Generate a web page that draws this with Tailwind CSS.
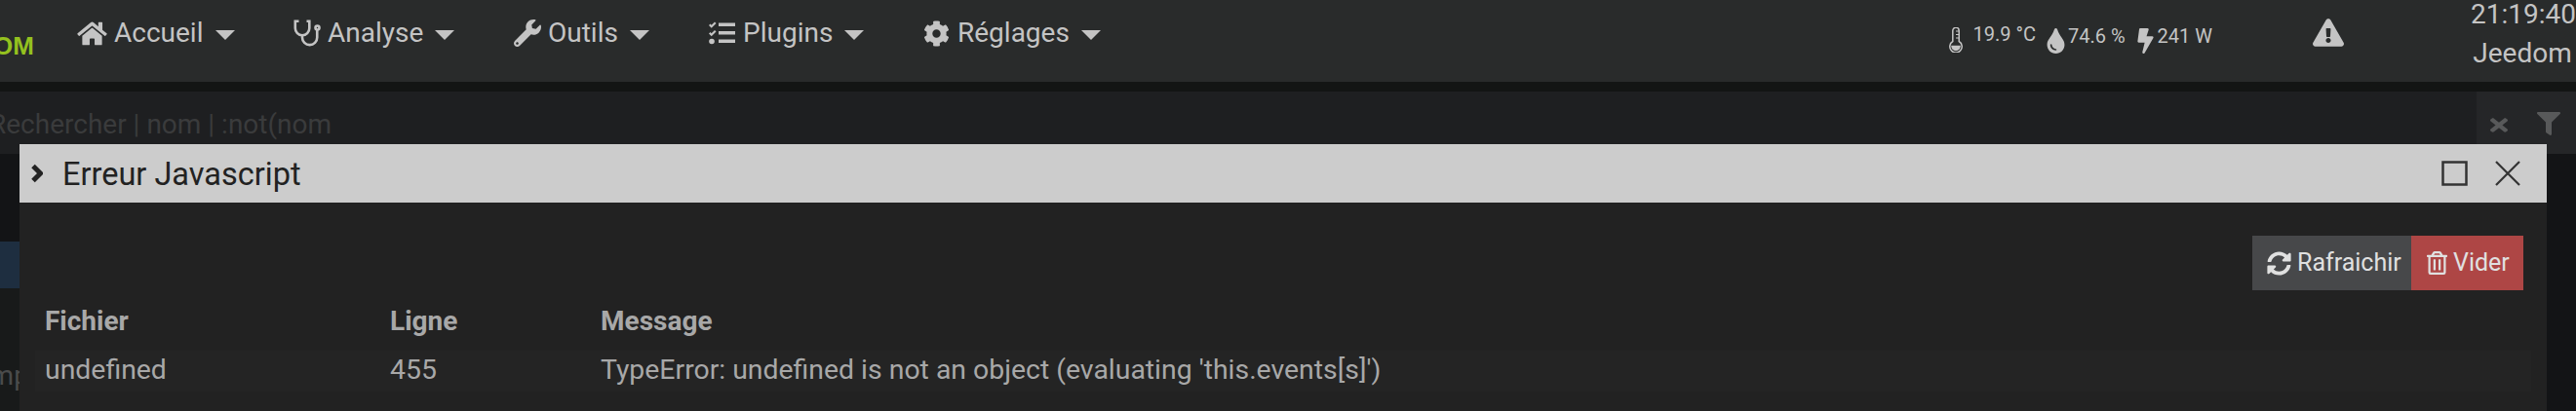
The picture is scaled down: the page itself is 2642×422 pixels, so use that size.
<!DOCTYPE html>
<html lang="fr">
  <head>
    <meta charset="UTF-8" />
    <title>Jeedom</title>
    <script src="https://cdn.jsdelivr.net/npm/@tailwindcss/browser@4"></script>
  </head>
  <body class="relative w-[2642px] h-[422px] overflow-hidden bg-[#131416] font-['Roboto',sans-serif] text-[28px] text-[#c4c4c4]">
    <!-- barre de navigation -->
    <nav class="flex items-start h-[84px] bg-[#292b2b]">
      <div class="w-[79px] h-full overflow-hidden flex justify-end pr-[44px] pt-[31px]">
        <span class="shrink-0 whitespace-nowrap font-['Liberation_Sans',sans-serif] font-bold text-[26px] leading-[32px] text-[#94c11f]">OM</span>
      </div>
      <div class="flex items-center h-[68px] w-[221px]">
        <svg class="w-[31px] h-[27px] fill-current" viewBox="0 0 576 512"><path d="M280.37 148.26L96 300.11V464a16 16 0 0 0 16 16l112.06-.29a16 16 0 0 0 15.92-16V368a16 16 0 0 1 16-16h64a16 16 0 0 1 16 16v95.64a16 16 0 0 0 16 16.05L464 480a16 16 0 0 0 16-16V300L295.67 148.26a12.19 12.19 0 0 0-15.3 0zM571.6 251.47L488 182.56V44.05a12 12 0 0 0-12-12h-56a12 12 0 0 0-12 12v72.61L318.47 43a48 48 0 0 0-61 0L4.34 251.47a12 12 0 0 0-1.6 16.9l25.5 31A12 12 0 0 0 45.15 301l235.22-193.74a12.19 12.19 0 0 1 15.3 0L530.9 301a12 12 0 0 0 16.9-1.6l25.5-31a12 12 0 0 0-1.7-16.93z"/></svg>
        <span class="ml-[7px]">Accueil</span>
        <span class="ml-[13px] mt-[3px] border-x-[10px] border-x-transparent border-t-[10px] border-t-current"></span>
      </div>
      <div class="flex items-center h-[68px] w-[227px]">
        <svg class="ml-[1px] w-[28px] h-[28px] fill-none stroke-current" viewBox="0 0 28 28" stroke-width="2.600"><path d="M5.500 1.800H1.800V9a7.250 7.250 0 0 0 14.500 0V1.800h-2.800"/><path d="M9 16.500v2a7.600 7.600 0 0 0 15.250 0V11"/><circle cx="24.500" cy="8.500" r="2"/></svg>
        <span class="ml-[7px]">Analyse</span>
        <span class="ml-[12px] mt-[3px] border-x-[10px] border-x-transparent border-t-[10px] border-t-current"></span>
      </div>
      <div class="flex items-center h-[68px] w-[199px]">
        <svg class="w-[28px] h-[28px] fill-current" viewBox="0 0 512 512"><path d="M507.73 109.1c-2.24-9.03-13.54-12.09-20.12-5.51l-74.36 74.36-67.88-11.31-11.31-67.88 74.36-74.36c6.62-6.62 3.43-17.9-5.66-20.16-47.38-11.74-99.55.91-136.58 37.93-39.64 39.64-50.55 97.1-34.05 147.2L18.74 402.76c-24.99 24.99-24.99 65.51 0 90.5 24.99 24.99 65.51 24.99 90.5 0l213.21-213.21c50.12 16.71 107.47 5.68 147.37-34.22 37.07-37.07 49.7-89.32 37.91-136.73zM64 472c-13.25 0-24-10.75-24-24 0-13.26 10.75-24 24-24s24 10.74 24 24c0 13.25-10.75 24-24 24z"/></svg>
        <span class="ml-[7px]">Outils</span>
        <span class="ml-[12px] mt-[3px] border-x-[10px] border-x-transparent border-t-[10px] border-t-current"></span>
      </div>
      <div class="flex items-center h-[68px] w-[221px]">
        <svg class="w-[28px] h-[24px] fill-current" viewBox="0 0 28 24"><path d="M1 4l1.500-1.500 1.200 1.200L7 .5 8.500 2 3.700 6.800zM1 12.500L2.500 11l1.200 1.200L7 9l1.500 1.500-4.800 4.800z"/><circle cx="4" cy="20.500" r="2.800"/><rect x="11" y="1.500" width="17" height="3.500"/><rect x="11" y="10" width="17" height="3.500"/><rect x="11" y="18.500" width="17" height="3.500"/></svg>
        <span class="ml-[8px]">Plugins</span>
        <span class="ml-[12px] mt-[3px] border-x-[10px] border-x-transparent border-t-[10px] border-t-current"></span>
      </div>
      <div class="flex items-center h-[68px]">
        <svg class="w-[27px] h-[27px] fill-current" viewBox="0 0 512 512"><path d="M487.4 315.7l-42.6-24.6c4.3-23.2 4.3-47 0-70.2l42.6-24.6c4.9-2.8 7.1-8.6 5.5-14-11.1-35.6-30-67.8-54.7-94.6-3.8-4.1-10-5.1-14.8-2.3L380.8 110c-17.9-15.4-38.5-27.3-60.8-35.1V25.8c0-5.6-3.9-10.5-9.4-11.7-36.7-8.2-74.3-7.8-109.2 0-5.5 1.2-9.4 6.1-9.4 11.7V75c-22.2 7.9-42.8 19.8-60.8 35.1L88.7 85.5c-4.9-2.8-11-1.9-14.8 2.3-24.7 26.7-43.6 58.9-54.7 94.6-1.7 5.4.6 11.2 5.5 14L67.3 221c-4.3 23.2-4.3 47 0 70.2l-42.6 24.6c-4.9 2.8-7.1 8.6-5.5 14 11.1 35.6 30 67.8 54.7 94.6 3.8 4.1 10 5.1 14.8 2.3l42.6-24.6c17.9 15.4 38.5 27.3 60.8 35.1v49.2c0 5.6 3.9 10.5 9.4 11.7 36.7 8.2 74.3 7.8 109.2 0 5.5-1.2 9.4-6.1 9.4-11.7v-49.2c22.2-7.9 42.8-19.8 60.8-35.1l42.6 24.6c4.9 2.8 11 1.9 14.8-2.3 24.7-26.7 43.6-58.9 54.7-94.6 1.5-5.5-.7-11.3-5.6-14.1zM256 336c-44.1 0-80-35.9-80-80s35.9-80 80-80 80 35.9 80 80-35.9 80-80 80z"/></svg>
        <span class="ml-[8px]">Réglages</span>
        <span class="ml-[12px] mt-[3px] border-x-[10px] border-x-transparent border-t-[10px] border-t-current"></span>
      </div>

      <!-- infos de droite -->
      <div class="ml-auto flex items-start text-[20px] leading-[24px]">
        <svg class="mt-[28px] w-[14px] h-[26px] fill-none stroke-current" viewBox="0 0 14 26" stroke-width="1.500"><path d="M3.800 14.500V3.500a3.200 3.200 0 0 1 6.400 0v11a6.200 6.200 0 1 1-6.400 0z"/><path d="M7 4h3M7 7.500h3M7 11h3" stroke-width="1.200"/><path d="M3 19.500h8a4 4 0 0 1-8 0z" class="fill-current"/></svg>
        <span class="ml-[11px] mt-[23px]">19.9 °C</span>
        <svg class="ml-[11px] mt-[29px] w-[19px] h-[26px] fill-current" viewBox="0 0 352 512"><path d="M205.22 22.09c-7.94-28.78-49.94-30.12-58.44 0C100.01 179.85 0 222.72 0 333.91 0 432.35 78.72 512 176 512s176-79.65 176-178.09c0-111.75-99.79-153.34-146.78-311.82zM176 448c-61.75 0-112-50.25-112-112 0-8.84 7.16-16 16-16s16 7.16 16 16c0 44.11 35.89 80 80 80 8.84 0 16 7.16 16 16s-7.16 16-16 16z"/></svg>
        <span class="ml-[3px] mt-[25px]">74.6 %</span>
        <svg class="ml-[12px] mt-[29px] w-[17px] h-[26px] fill-current" viewBox="0 0 320 512"><path d="M296 160H180.6l42.6-129.8C227.2 15 215.7 0 200 0H56C44 0 33.8 8.9 32.2 20.8l-32 240C-1.7 275.2 9.500 288 24 288h118.7L96.600 482.5c-3.600 15.2 8 29.500 23.300 29.500 8.400 0 16.400-4.400 20.800-12l176-304c9.300-15.900-2.200-36-20.700-36z"/></svg>
        <span class="ml-[4px] mt-[25px]">241 W</span>
        <svg class="ml-[103px] mt-[19px] w-[32px] h-[29px] fill-current" viewBox="0 0 576 512"><path d="M569.517 440.013C587.975 472.007 564.806 512 527.94 512H48.054c-36.937 0-59.999-40.055-41.577-71.987L246.423 23.985c18.467-32.009 64.72-31.951 83.154 0l239.94 416.028zM288 354c-25.405 0-46 20.595-46 46s20.595 46 46 46 46-20.595 46-46-20.595-46-46-46zm-43.673-165.346l7.418 136c.347 6.364 5.609 11.346 11.982 11.346h48.546c6.373 0 11.635-4.982 11.982-11.346l7.418-136c.375-6.874-5.098-12.654-11.982-12.654h-63.383c-6.884 0-12.356 5.78-11.981 12.654z"/></svg>
        <div class="ml-[130px] mr-[2px] w-[106px] text-center text-[28px] leading-[40px] -mt-[5px] whitespace-nowrap">
          <div>21:19:40</div>
          <div>Jeedom</div>
        </div>
      </div>
    </nav>
    <div class="h-[10px] bg-[#131514]"></div>

    <!-- recherche -->
    <div class="flex h-[64px] bg-[#1e1f21]">
      <span class="-ml-[11px] mt-[16px] text-[#3a3b3c] leading-[36px]">Rechercher | nom | :not(nom</span>
      <div class="ml-auto flex w-[102px] bg-[#252628] text-[#58595a]">
        <svg class="ml-[14px] mt-[24px] w-[18px] h-[21px] fill-current" viewBox="0 0 352 512" preserveAspectRatio="none"><path d="M242.72 256l100.07-100.07c12.28-12.28 12.28-32.19 0-44.48l-22.24-22.24c-12.28-12.28-32.19-12.28-44.48 0L176 189.28 75.93 89.21c-12.28-12.28-32.19-12.28-44.48 0L9.21 111.45c-12.28 12.28-12.28 32.19 0 44.48L109.28 256 9.21 356.07c-12.28 12.28-12.28 32.19 0 44.48l22.24 22.24c12.28 12.28 32.2 12.28 44.48 0L176 322.72l100.07 100.07c12.28 12.28 32.2 12.28 44.48 0l22.24-22.24c12.28-12.28 12.28-32.19 0-44.48L242.72 256z"/></svg>
        <svg class="ml-[30px] mt-[21px] w-[24px] h-[24px] fill-current" viewBox="0 0 512 512"><path d="M487.976 0H24.028C2.71 0-8.047 25.866 7.058 40.971L192 225.941V432c0 7.831 3.821 15.17 10.237 19.662l80 55.98C298.02 518.69 320 507.493 320 487.98V225.941l184.947-184.97C520.021 25.896 509.338 0 487.976 0z"/></svg>
      </div>
    </div>

    <!-- contenu derriere la fenetre -->
    <div class="w-[20px] overflow-hidden">
      <div class="mt-[90px] h-[48px] bg-[#1e2e40]"></div>
      <div class="h-[126px] bg-[#181a1a] pt-[72px] whitespace-nowrap text-[#4a4b4b] leading-[36px]"><span class="block -ml-[18px]">Impe</span></div>
    </div>

    <!-- fenetre Erreur Javascript -->
    <section class="absolute left-[20px] top-[148px] w-[2592px] h-[274px] bg-[#222222] text-[#a8a8a8]">
      <header class="flex items-center h-[60px] bg-[#cccccc] text-[#222222]">
        <svg class="ml-[12px] w-[12px] h-[20px] fill-none stroke-current" viewBox="0 0 12 20" stroke-width="5"><path d="M2 2.500l7.500 7.500-7.500 7.500"/></svg>
        <span class="ml-[20px] pt-[2px] text-[32.5px] leading-[36px]">Erreur Javascript</span>
        <svg class="ml-auto w-[27px] h-[26px] fill-none stroke-[#333333]" viewBox="0 0 27 26" stroke-width="2.500"><rect x="1.500" y="1.500" width="24" height="23"/></svg>
        <svg class="ml-[28px] mr-[27px] w-[26px] h-[26px] fill-none stroke-[#333333]" viewBox="0 0 26 26" stroke-width="2.200"><path d="M1 1l24 24M25 1L1 25"/></svg>
      </header>

      <div class="flex justify-end mt-[34px] mr-[24px] text-[25px] text-[#e0e0e0]">
        <button class="flex items-center h-[56px] w-[163px] pl-[15px] bg-[#47484a]">
          <svg class="w-[25px] h-[25px] fill-current" viewBox="0 0 512 512"><path d="M370.72 133.28C339.458 104.008 298.888 87.962 255.848 88c-77.458.068-144.328 53.178-162.791 126.85-1.344 5.363-6.122 9.15-11.651 9.15H24.103c-7.498 0-13.194-6.807-11.807-14.176C33.933 94.924 134.813 8 256 8c66.448 0 126.791 26.136 171.315 68.685L463.03 40.97C478.149 25.851 504 36.559 504 57.941V192c0 13.255-10.745 24-24 24H345.941c-21.382 0-32.09-25.851-16.971-40.971l41.75-41.749zM32 296h134.059c21.382 0 32.09 25.851 16.971 40.971l-41.75 41.75c31.262 29.273 71.835 45.319 114.876 45.28 77.418-.07 144.315-53.144 162.787-126.849 1.344-5.363 6.122-9.15 11.651-9.15h57.304c7.498 0 13.194 6.807 11.807 14.176C478.067 417.076 377.187 504 256 504c-66.448 0-126.791-26.136-171.315-68.685L48.97 471.03C33.851 486.149 8 475.441 8 454.059V320c0-13.255 10.745-24 24-24z"/></svg>
          <span class="ml-[6px]">Rafraichir</span>
        </button>
        <button class="flex items-center h-[56px] w-[115px] pl-[16px] bg-[#ae4645]">
          <svg class="w-[21px] h-[24px] fill-current" viewBox="0 0 448 512"><path d="M268 416h24a12 12 0 0 0 12-12V188a12 12 0 0 0-12-12h-24a12 12 0 0 0-12 12v216a12 12 0 0 0 12 12zM432 80h-82.41l-34-56.7A48 48 0 0 0 274.41 0H173.59a48 48 0 0 0-41.16 23.3L98.41 80H16A16 16 0 0 0 0 96v16a16 16 0 0 0 16 16h16v336a48 48 0 0 0 48 48h288a48 48 0 0 0 48-48V128h16a16 16 0 0 0 16-16V96a16 16 0 0 0-16-16zM171.84 50.91A6 6 0 0 1 177 48h94a6 6 0 0 1 5.15 2.91L293.61 80H154.39zM368 464H80V128h288zm-212-48h24a12 12 0 0 0 12-12V188a12 12 0 0 0-12-12h-24a12 12 0 0 0-12 12v216a12 12 0 0 0 12 12z"/></svg>
          <span class="ml-[6px]">Vider</span>
        </button>
      </div>

      <div class="mt-[14px] mx-[16px]">
        <div class="flex h-[48px] items-center pl-[10px] pb-[12px] font-bold">
          <span class="w-[354px]">Fichier</span>
          <span class="w-[216px]">Ligne</span>
          <span>Message</span>
        </div>
        <div class="flex h-[42px] items-center pl-[10px] pb-[2px] bg-[#242424] text-[28.4px]">
          <span class="w-[354px]">undefined</span>
          <span class="w-[216px]">455</span>
          <span>TypeError: undefined is not an object (evaluating 'this.events[s]')</span>
        </div>
      </div>
    </section>
  </body>
</html>
